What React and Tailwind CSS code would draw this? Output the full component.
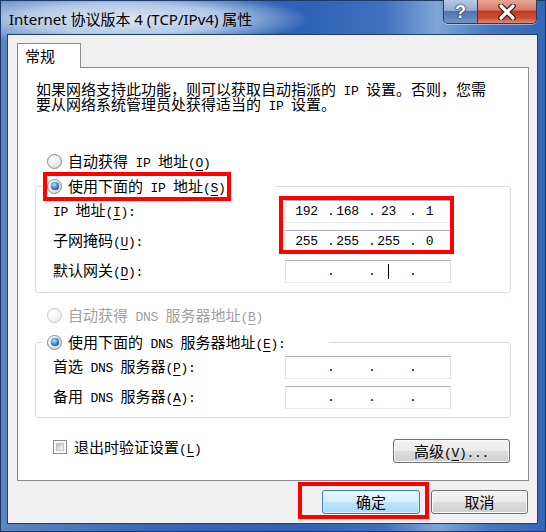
import React from "react";

function T({ s }) {
  const chars = [];
  for (let i = 0; i < s.length; i++) {
    let ch = s[i];
    let ul = false;
    if (ch === "&" && i + 1 < s.length) {
      ul = true;
      i++;
      ch = s[i];
    }
    chars.push({ ch, a: ch.charCodeAt(0) < 128, ul });
  }
  const groups = [];
  for (const c of chars) {
    const g = groups[groups.length - 1];
    if (g && g.a === c.a && g.ul === c.ul) g.t += c.ch;
    else groups.push({ a: c.a, ul: c.ul, t: c.ch });
  }
  return (
    <>
      {groups.map((g, i) =>
        g.a ? (
          <span
            key={i}
            className={
              g.ul
                ? "font-['Liberation_Mono',monospace] text-[13px] tracking-[-0.3px] underline decoration-1 underline-offset-[3px]"
                : "font-['Liberation_Mono',monospace] text-[13px] tracking-[-0.3px]"
            }
          >
            {g.t}
          </span>
        ) : (
          <span key={i}>{g.t}</span>
        )
      )}
    </>
  );
}

function Radio({ checked, disabled }) {
  return (
    <span
      className={
        disabled
          ? "flex h-[15px] w-[15px] shrink-0 items-center justify-center rounded-full border border-[#c8c8c8] bg-[radial-gradient(circle_at_35%_30%,#ffffff_0%,#f4f4f4_50%,#e6e6e6_100%)]"
          : "flex h-[15px] w-[15px] shrink-0 items-center justify-center rounded-full border border-[#8a8a8a] bg-[radial-gradient(circle_at_35%_30%,#ffffff_0%,#efefef_45%,#cdcdcd_100%)]"
      }
    >
      {checked && (
        <span className="h-[8px] w-[8px] rounded-full bg-[radial-gradient(circle_at_40%_35%,#c4e6ff_0%,#3d8ee3_45%,#0b3a7a_100%)] shadow-[0_0_1px_#0b3a7a]" />
      )}
    </span>
  );
}

function IpField({ vals, cursor }) {
  return (
    <div className="grid h-[23px] w-[166px] grid-cols-4 border border-t-[#abadb3] border-x-[#dfe3ea] border-b-[#e3e9ef] bg-white font-['Liberation_Mono',monospace] text-[13px] tracking-[-0.3px] leading-[21px] text-black">
      {[0, 1, 2, 3].map((i) => (
        <div key={i} className="flex h-full items-center">
          {i > 0 && <span className="w-[6px] text-center">.</span>}
          <span
            className={
              i > 0
                ? "flex flex-1 items-center justify-center pr-[6px]"
                : "flex flex-1 items-center justify-center"
            }
          >
            {vals ? vals[i] : ""}
            {cursor === i && <span className="block h-[15px] w-px bg-black" />}
          </span>
        </div>
      ))}
    </div>
  );
}

function Row({ label, children }) {
  return (
    <div className="flex h-[23px] items-center">
      <div className="h-[18px] w-[249px] whitespace-pre pl-[17px] leading-[14px]">
        <T s={label} />
      </div>
      {children}
    </div>
  );
}

function Btn({ children, primary, className }) {
  return (
    <div
      className={
        (primary
          ? "flex items-center justify-center rounded-[3px] border border-[#3c7fb1] bg-[linear-gradient(#eaf6fd_0%,#d9f0fc_50%,#bee6fd_50%,#a7d9f5_100%)] shadow-[inset_0_0_0_1px_#d8f0fb] "
          : "flex items-center justify-center rounded-[3px] border border-[#707070] bg-[linear-gradient(#f2f2f2_0%,#ebebeb_50%,#dddddd_50%,#cfcfcf_100%)] shadow-[inset_0_0_0_1px_#fbfbfb] ") +
        className
      }
    >
      <span className="block h-[18px] whitespace-pre leading-[17px]">{children}</span>
    </div>
  );
}

export default function App() {
  return (
    <div className="h-[532px] w-[546px] overflow-hidden bg-[radial-gradient(ellipse_185px_28px_at_125px_19px,rgba(218,229,244,1)_0%,rgba(200,216,238,0.85)_55%,rgba(200,216,238,0)_100%),linear-gradient(90deg,#5d86c2_0%,#3469b8_28%,#2d62b4_55%,#3e70bd_70%,#7fa4d8_80%,#4776bf_90%,#3466b6_100%)] font-['Noto_Sans_CJK_SC',sans-serif] text-[15px] text-black shadow-[inset_0_0_0_1px_#1c3a68]">
      {/* title bar */}
      <div className="flex h-[34px] items-start">
        <div className="ml-[9px] mt-[9px] whitespace-pre font-['Noto_Sans','Noto_Sans_CJK_SC',sans-serif] text-[15px] leading-[20px] text-black">
          Internet 协议版本 4 (TCP/IPv4) 属性
        </div>
        <div className="ml-auto mr-[9px] flex h-[24px] overflow-hidden rounded-b-[5px] border border-t-0 border-[#2a3d5e] shadow-[0_1px_0_rgba(255,255,255,0.45)]">
          <div className="flex w-[34px] items-center justify-center border-r border-[#2a3d5e] bg-[linear-gradient(#b7cae6_0%,#93acd6_45%,#5274ad_50%,#7293c8_100%)]">
            <span className="font-['Liberation_Sans',sans-serif] text-[18px] font-bold leading-[18px] text-white [text-shadow:0_0_1px_#1d2f4d,0_0_1px_#1d2f4d,0_0_2px_#1d2f4d]">
              ?
            </span>
          </div>
          <div className="flex w-[58px] items-center justify-center bg-[linear-gradient(#e8a593_0%,#d77c67_42%,#c2391f_50%,#cc5438_80%,#de8c75_100%)]">
            <svg width="20" height="16" viewBox="0 0 20 16">
              <path d="M4 2 L16 14 M16 2 L4 14" stroke="#3b1710" strokeWidth="5.5" strokeLinecap="round" />
              <path d="M4 2 L16 14 M16 2 L4 14" stroke="#ffffff" strokeWidth="3.2" strokeLinecap="round" />
            </svg>
          </div>
        </div>
      </div>

      {/* client area */}
      <div className="ml-[7px] flex h-[490px] w-[531px] flex-col border border-[#22406c] bg-[#f0f0f0]">
        <div className="pt-[8px]">
          <div className="relative z-10 -mb-px ml-[9px] flex h-[25px] w-[64px] items-center border border-b-0 border-[#898c95] bg-white pl-[7px] leading-[18px]">
            常规
          </div>
          <div className="ml-[9px] flex h-[414px] w-[512px] flex-col border border-[#898c95] bg-white">
            <div className="whitespace-pre pl-[18px] pt-[13px]">
              <div className="h-[15px] leading-[15px]">
                <T s="如果网络支持此功能，则可以获取自动指派的 IP 设置。否则，您需" />
              </div>
              <div className="h-[15px] leading-[15px]">
                <T s="要从网络系统管理员处获得适当的 IP 设置。" />
              </div>
            </div>

            <div className="ml-[29px] mt-[41px] flex h-[18px] items-center gap-[6px] whitespace-pre leading-[18px]">
              <Radio />
              <span className="block h-[18px]">
                <T s="自动获得 IP 地址(&O)" />
              </span>
            </div>

            <fieldset className="ml-[17px] mt-[7px] w-[476px] rounded-[3px] border border-[#d5dfe5] pb-[9px]">
              <legend className="relative ml-[7px] flex h-[18px] w-[232px] items-center gap-[6px] whitespace-pre pl-[4px] leading-[18px]">
                <Radio checked />
                <span className="block h-[18px]">
                  <T s="使用下面的 IP 地址(&S):" />
                </span>
                <span className="pointer-events-none absolute left-0 top-[-5px] h-[29px] w-[188px] border-[4px] border-[#ff0000]" />
              </legend>
              <div className="relative mt-[5px] flex flex-col gap-[7px]">
                <Row label="IP 地址(&I):">
                  <IpField vals={["192", "168", "23", "1"]} />
                </Row>
                <Row label="子网掩码(&U):">
                  <IpField vals={["255", "255", "255", "0"]} />
                </Row>
                <Row label="默认网关(&D):">
                  <IpField cursor={2} />
                </Row>
                <div className="pointer-events-none absolute left-[243px] top-[-4px] h-[58px] w-[175px] border-[4px] border-[#ff0000]" />
              </div>
            </fieldset>

            <div className="ml-[29px] mt-[13px] flex h-[18px] items-center gap-[6px] whitespace-pre leading-[18px] text-[#a0a0a0]">
              <Radio disabled />
              <span className="block h-[18px]">
                <T s="自动获得 DNS 服务器地址(&B)" />
              </span>
            </div>

            <fieldset className="ml-[17px] mt-[9px] w-[476px] rounded-[3px] border border-[#d5dfe5] pb-[8px]">
              <legend className="ml-[7px] flex h-[18px] w-[286px] items-center gap-[6px] whitespace-pre pl-[4px] leading-[18px]">
                <Radio checked />
                <span className="block h-[18px]">
                  <T s="使用下面的 DNS 服务器地址(&E):" />
                </span>
              </legend>
              <div className="mt-[5px] flex flex-col gap-[7px]">
                <Row label="首选 DNS 服务器(&P):">
                  <IpField />
                </Row>
                <Row label="备用 DNS 服务器(&A):">
                  <IpField />
                </Row>
              </div>
            </fieldset>

            <div className="ml-[35px] mr-[18px] mt-[21px] flex items-start justify-between">
              <div className="flex h-[15px] items-center gap-[7px] whitespace-pre leading-[18px]">
                <span className="h-[14px] w-[14px] border border-[#8e8f8f] bg-[#f6f6f6] p-[2px]">
                  <span className="block h-full w-full border border-[#c2c7ce] bg-[linear-gradient(135deg,#aeb6c0_0%,#dfe3e8_60%,#f2f3f5_100%)]" />
                </span>
                <span className="block h-[18px]">
                  <T s="退出时验证设置(&L)" />
                </span>
              </div>
              <Btn className="h-[24px] w-[117px]">
                <T s="高级(&V)..." />
              </Btn>
            </div>
          </div>
        </div>

        <div className="mr-[9px] mt-[9px] flex justify-end gap-[11px]">
          <div className="relative">
            <Btn primary className="h-[24px] w-[98px]">
              确定
            </Btn>
            <div className="pointer-events-none absolute left-[-24px] top-[-8px] h-[37px] w-[131px] border-[4px] border-[#ff0000]" />
          </div>
          <Btn className="h-[24px] w-[97px]">取消</Btn>
        </div>
      </div>
    </div>
  );
}
